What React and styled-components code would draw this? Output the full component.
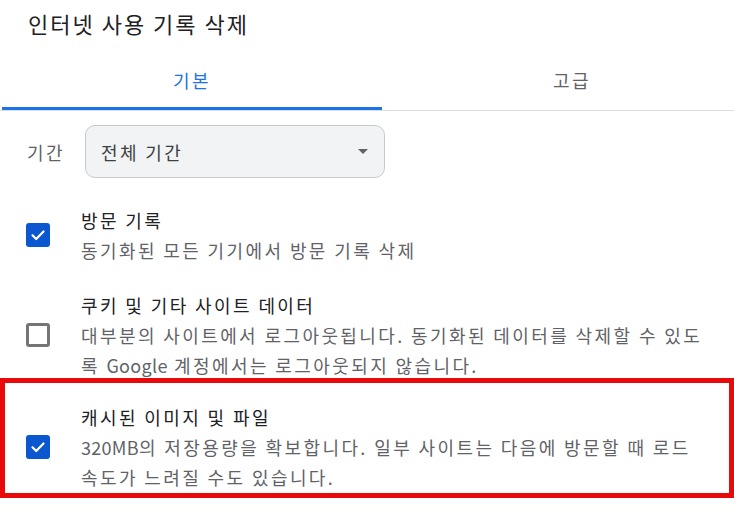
import React, { useState } from 'react'
import styled, { createGlobalStyle } from 'styled-components'

const GlobalStyle = createGlobalStyle`
    html, body {
        margin: 0;
        padding: 0;
        background: #ffffff;
    }
    body {
        font-family: "Noto Sans CJK KR", "Noto Sans", "Liberation Sans", sans-serif;
        color: #202124;
        overflow: hidden;
    }
`;

const Dialog = styled.div`
    width: 734px;
    height: 515px;
    display: flex;
    flex-direction: column;
    overflow: hidden;
`;

const Title = styled.h1`
    margin: 0;
    padding: 8px 0 0 28px;
    font-size: 22px;
    line-height: 30px;
    font-weight: 400;
    letter-spacing: 2px;
    color: #202124;
`;

const TabBar = styled.div`
    display: flex;
    margin-top: 12px;
    padding-left: 2px;
    border-bottom: 1px solid #dadce0;
    width: 100%;
`;

const Tab = styled.button`
    position: relative;
    flex: 0 0 380px;
    height: 60px;
    border: none;
    background: none;
    padding: 0;
    font-family: inherit;
    font-size: 18px;
    letter-spacing: 2.4px;
    color: ${p => (p.$active ? '#1a73e8' : '#5f6368')};
    cursor: pointer;

    &::after {
        content: '';
        position: absolute;
        left: 0;
        right: 0;
        bottom: 0;
        height: 3px;
        background: ${p => (p.$active ? '#1a73e8' : 'transparent')};
    }
`;

const PeriodRow = styled.div`
    display: flex;
    align-items: center;
    gap: 20px;
    margin-top: 14px;
    padding-left: 27px;
`;

const Label = styled.span`
    font-size: 18px;
    letter-spacing: 2.4px;
    color: #5f6368;
`;

const Select = styled.div`
    box-sizing: border-box;
    width: 300px;
    height: 53px;
    display: flex;
    align-items: center;
    justify-content: space-between;
    padding: 0 16px 0 15px;
    background: #f1f3f4;
    border: 1px solid #c8cacd;
    border-radius: 10px;
    font-size: 18px;
    letter-spacing: 2.4px;
    color: #3c4043;
`;

const Caret = styled.span`
    width: 0;
    height: 0;
    border-left: 5px solid transparent;
    border-right: 5px solid transparent;
    border-top: 5px solid #5f6368;
`;

const List = styled.div`
    display: flex;
    flex-direction: column;
    margin-top: 27px;
`;

const Item = styled.label`
    display: flex;
    align-items: center;
    gap: 31px;
    padding-left: 26px;
    padding-right: 20px;
    margin-bottom: 25px;
    cursor: pointer;
`;

const Highlight = styled.div`
    box-sizing: border-box;
    width: 734px;
    margin-top: -27px;
    padding: 19px 0 1px 0;
    border: 5px solid #e80a0a;

    ${Item} {
        padding-left: 21px;
        padding-right: 15px;
        margin-bottom: 0;
    }
`;

const Box = styled.span`
    box-sizing: border-box;
    flex: 0 0 24px;
    width: 24px;
    height: 24px;
    border-radius: 3px;
    display: flex;
    align-items: center;
    justify-content: center;
    background: ${p => (p.$checked ? '#0b57d0' : '#fff')};
    border: ${p => (p.$checked ? 'none' : '3px solid #757575')};
`;

const Text = styled.div`
    display: flex;
    flex-direction: column;
    font-size: 18px;
    line-height: 30px;
    letter-spacing: 2.4px;
`;

const ItemTitle = styled.span`
    color: #202124;
`;

const ItemDesc = styled.span`
    color: #5f6368;
`;

// latin words in the reference aren't tracked out like the hangul
const Latin = styled.span`
    letter-spacing: 0.3px;
`;

const Check = () => (
    <svg width="16" height="16" viewBox="0 0 16 16">
        <path d="M2.5 8.3 L6.2 12 L13.5 4.5" fill="none" stroke="#fff" strokeWidth="2.2" strokeLinecap="round" strokeLinejoin="round" />
    </svg>
)

const CheckItem = ({ checked, title, desc, onToggle }) => (
    <Item onClick={onToggle}>
        <Box $checked={checked}>{checked && <Check />}</Box>
        <Text>
            <ItemTitle>{title}</ItemTitle>
            <ItemDesc>{desc}</ItemDesc>
        </Text>
    </Item>
)

export default function App() {
    const [tab, setTab] = useState('basic')
    const [checks, setChecks] = useState({ history: true, cookies: false, cache: true })
    const toggle = key => e => {
        e.preventDefault()
        setChecks(c => ({ ...c, [key]: !c[key] }))
    }

    return (
        <Dialog>
            <GlobalStyle />
            <Title>인터넷 사용 기록 삭제</Title>
            <TabBar>
                <Tab $active={tab === 'basic'} onClick={() => setTab('basic')}>기본</Tab>
                <Tab $active={tab === 'advanced'} onClick={() => setTab('advanced')}>고급</Tab>
            </TabBar>
            <PeriodRow>
                <Label>기간</Label>
                <Select>
                    전체 기간
                    <Caret />
                </Select>
            </PeriodRow>
            <List>
                <CheckItem
                    checked={checks.history}
                    onToggle={toggle('history')}
                    title="방문 기록"
                    desc="동기화된 모든 기기에서 방문 기록 삭제"
                />
                <CheckItem
                    checked={checks.cookies}
                    onToggle={toggle('cookies')}
                    title="쿠키 및 기타 사이트 데이터"
                    desc={<>대부분의 사이트에서 로그아웃됩니다. 동기화된 데이터를 삭제할 수 있도록 <Latin>Google</Latin> 계정에서는 로그아웃되지 않습니다.</>}
                />
                <Highlight>
                    <CheckItem
                        checked={checks.cache}
                        onToggle={toggle('cache')}
                        title="캐시된 이미지 및 파일"
                        desc={<><Latin>320MB</Latin>의 저장용량을 확보합니다. 일부 사이트는 다음에 방문할 때 로드 속도가 느려질 수도 있습니다.</>}
                    />
                </Highlight>
            </List>
        </Dialog>
    )
}
